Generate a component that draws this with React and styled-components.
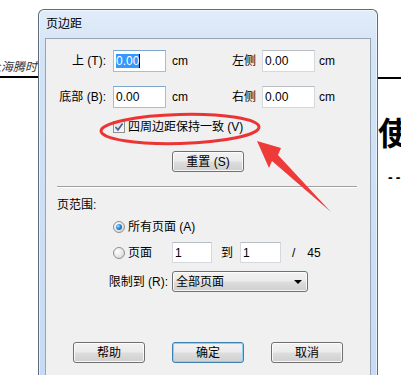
import styled, { createGlobalStyle } from "styled-components"

const Global = createGlobalStyle`
    html, body {
        margin: 0;
        padding: 0;
        background: #fff;
    }
`

const FONT = `"Liberation Sans", "Noto Sans CJK SC", sans-serif`

const Page = styled.div`
    position: relative;
    display: flex;
    width: 401px;
    height: 375px;
    overflow: hidden;
    background: #fff;
    font-family: ${FONT};
    font-size: 12px;
    line-height: 16px;
    color: #000;
`

const DocLeft = styled.div`
    flex: none;
    width: 38px;
    padding-top: 59px;
    overflow: hidden;
    .text {
        display: flex;
        justify-content: flex-end;
        white-space: nowrap;
        font-style: italic;
        color: #333;
        padding-right: 1px;
    }
    .rule {
        height: 2px;
        margin-top: 1px;
        background: #000;
    }
`

const DocRight = styled.div`
    flex: 1;
    min-width: 0;
    padding-top: 77px;
    overflow: hidden;
    white-space: nowrap;
    .rule {
        height: 2px;
        background: #000;
    }
    .big {
        margin-top: 34px;
        font-size: 32px;
        line-height: 36px;
        font-weight: bold;
        font-family: "Noto Sans CJK SC", sans-serif;
    }
    .dash {
        margin-top: 20px;
        padding-left: 10px;
        font-weight: bold;
        font-size: 14px;
        letter-spacing: 3px;
    }
`

const Window = styled.div`
    flex: none;
    display: flex;
    flex-direction: column;
    width: 340px;
    height: 380px;
    margin-top: 9px;
    box-sizing: border-box;
    padding: 0 6px;
    border: 1px solid #5d6b7c;
    border-bottom: none;
    border-radius: 6px 6px 0 0;
    background: linear-gradient(#e1ecf9 0%, #d2e3f6 12%, #c6dbf3 100%);
    box-shadow: inset 0 0 0 1px rgba(255, 255, 255, 0.55);
`

const TitleBar = styled.div`
    height: 28px;
    display: flex;
    align-items: center;
    padding-left: 1px;
    font-size: 12px;
`

const Client = styled.div`
    flex: 1;
    display: flex;
    flex-direction: column;
    border: 1px solid #97a4b4;
    border-bottom: none;
    background: #f0f0f0;
    padding-top: 11px;
`

const FieldRow = styled.div`
    display: flex;
    align-items: center;
    height: 22px;
    margin-top: ${(p) => p.top || 0}px;
`

const Label = styled.div`
    flex: none;
    width: ${(p) => (p.w ? `${p.w}px` : "auto")};
    text-align: ${(p) => (p.right ? "right" : "left")};
    margin-left: ${(p) => p.ml || 0}px;
    margin-right: ${(p) => p.mr || 0}px;
    white-space: nowrap;
`

const Field = styled.div`
    flex: none;
    box-sizing: border-box;
    width: ${(p) => p.w}px;
    height: ${(p) => p.h || 22}px;
    display: flex;
    align-items: center;
    padding: 0 2px;
    background: #fff;
    border: 1px solid ${(p) => (p.hot ? "#9fbfdf" : "#d5d9de")};
    border-top-color: ${(p) => (p.hot ? "#7fa6cc" : "#b9bec5")};
    white-space: nowrap;
    .sel {
        background: #3399ff;
        color: #fff;
        line-height: 14px;
        border-right: 1px solid #000;
    }
`

const CheckRow = styled.div`
    display: flex;
    align-items: center;
    height: 16px;
    margin-top: 11px;
    padding-left: 67px;
`

const Box = styled.div`
    flex: none;
    box-sizing: border-box;
    width: 12px;
    height: 12px;
    margin-right: 3px;
    border: 1px solid #8e8f8f;
    background: linear-gradient(135deg, #dcdcdc, #fbfbfb);
    box-shadow: inset 0 0 0 1px #f4f4f4;
    display: flex;
    align-items: center;
    justify-content: center;
`

const Button = styled.div`
    flex: none;
    box-sizing: border-box;
    width: 72px;
    height: 21px;
    display: flex;
    align-items: center;
    justify-content: center;
    border: 1px solid ${(p) => (p.primary ? "#3c7fb1" : "#707070")};
    border-radius: 3px;
    background: linear-gradient(#f2f2f2 0%, #ebebeb 48%, #dddddd 52%, #cfcfcf 100%);
    box-shadow: inset 0 0 0 1px ${(p) => (p.primary ? "#8fd0f3" : "rgba(255,255,255,0.8)")};
    white-space: nowrap;
`

const ButtonRow = styled.div`
    display: flex;
    gap: 27px;
    margin-top: ${(p) => p.top || 0}px;
    padding-left: ${(p) => p.left || 0}px;
`

const Separator = styled.div`
    margin: 14px 13px 0 11px;
    border-top: 1px solid #a0a0a0;
    border-bottom: 1px solid #fff;
`

const GroupTitle = styled.div`
    margin-top: 9px;
    padding-left: 11px;
`

const RadioRow = styled.div`
    display: flex;
    align-items: center;
    height: ${(p) => p.h || 16}px;
    margin-top: ${(p) => p.top || 0}px;
    padding-left: 67px;
`

const Radio = styled.div`
    flex: none;
    position: relative;
    box-sizing: border-box;
    width: 12px;
    height: 12px;
    margin-right: 3px;
    border-radius: 50%;
    border: 1px solid #8e8f8f;
    background: radial-gradient(circle at 35% 35%, #ffffff 0%, #e6e6e6 55%, #c9c9c9 100%);
    &::after {
        content: "";
        display: ${(p) => (p.checked ? "block" : "none")};
        position: absolute;
        left: 2px;
        top: 2px;
        width: 6px;
        height: 6px;
        border-radius: 50%;
        background: radial-gradient(circle at 35% 35%, #a9e1ff 0%, #2a8ad6 45%, #0d4a8c 100%);
    }
`

const Select = styled.div`
    flex: none;
    box-sizing: border-box;
    width: 136px;
    height: 21px;
    display: flex;
    align-items: center;
    justify-content: space-between;
    padding: 0 5px 0 3px;
    border: 1px solid #707070;
    border-radius: 3px;
    background: linear-gradient(#f2f2f2 0%, #ebebeb 48%, #dddddd 52%, #cfcfcf 100%);
    box-shadow: inset 0 0 0 1px rgba(255, 255, 255, 0.8);
    .arrow {
        width: 0;
        height: 0;
        border-left: 4px solid transparent;
        border-right: 4px solid transparent;
        border-top: 4px solid #000;
    }
`

const Overlay = styled.svg`
    position: absolute;
    left: 0;
    top: 0;
    pointer-events: none;
`

const App = () => {
    return (
        <Page>
            <Global />
            <DocLeft>
                <div className="text">上海腾时</div>
                <div className="rule" />
            </DocLeft>
            <Window>
                <TitleBar>页边距</TitleBar>
                <Client>
                    <FieldRow>
                        <Label w={60} right>上 (T):</Label>
                        <Field w={53} hot style={{ marginLeft: 7 }}>
                            <span className="sel">0.00</span>
                        </Field>
                        <Label w={60} ml={6}>cm</Label>
                        <Label mr={6}>左侧</Label>
                        <Field w={53}>0.00</Field>
                        <Label ml={4}>cm</Label>
                    </FieldRow>
                    <FieldRow top={14}>
                        <Label w={60} right>底部 (B):</Label>
                        <Field w={53} hot style={{ marginLeft: 7 }}>0.00</Field>
                        <Label w={60} ml={6}>cm</Label>
                        <Label mr={6}>右侧</Label>
                        <Field w={53}>0.00</Field>
                        <Label ml={4}>cm</Label>
                    </FieldRow>
                    <CheckRow>
                        <Box>
                            <svg width="10" height="10" viewBox="0 0 10 10">
                                <path d="M1.5 5 L4 7.8 L8.6 1.6" fill="none" stroke="#4a5e9c" strokeWidth="1.7" />
                            </svg>
                        </Box>
                        四周边距保持一致 (V)
                    </CheckRow>
                    <ButtonRow top={16} left={126}>
                        <Button>重置 (S)</Button>
                    </ButtonRow>
                    <Separator />
                    <GroupTitle>页范围:</GroupTitle>
                    <RadioRow top={6}>
                        <Radio checked />
                        所有页面 (A)
                    </RadioRow>
                    <RadioRow top={7} h={21}>
                        <Radio />
                        <Label w={44}>页面</Label>
                        <Field w={40} h={21}>1</Field>
                        <Label ml={9} mr={7}>到</Label>
                        <Field w={41} h={21}>1</Field>
                        <Label ml={11}>/</Label>
                        <Label ml={12}>45</Label>
                    </RadioRow>
                    <FieldRow top={8} style={{ height: 21 }}>
                        <Label w={122} right>限制到 (R):</Label>
                        <Select style={{ marginLeft: 4 }}>
                            <span>全部页面</span>
                            <span className="arrow" />
                        </Select>
                    </FieldRow>
                    <ButtonRow top={50} left={27}>
                        <Button>帮助</Button>
                        <Button primary>确定</Button>
                        <Button>取消</Button>
                    </ButtonRow>
                </Client>
            </Window>
            <DocRight>
                <div className="rule" />
                <div className="big">使用</div>
                <div className="dash">--</div>
            </DocRight>
            <Overlay width="401" height="375" viewBox="0 0 401 375">
                <ellipse cx="180" cy="129" rx="79" ry="14.5" fill="none" stroke="#ec3434" strokeWidth="3" transform="rotate(-1.5 180 129)" />
                <polygon
                    points="257,141 281,148 278,155 331,212 272,161 269,168"
                    fill="#ef3a3a"
                />
            </Overlay>
        </Page>
    )
}

export default App
